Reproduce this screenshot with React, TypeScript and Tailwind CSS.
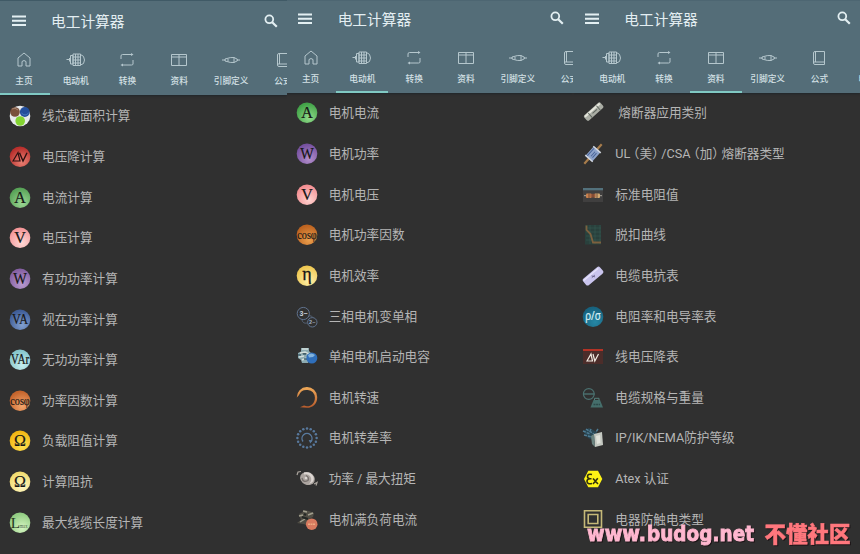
import React from "react";

const serif = '"Liberation Serif", serif';

function Menu() {
  return (
    <svg width="14" height="12" viewBox="0 0 14 12" stroke="#e3eff2" strokeWidth="2">
      <path d="M0 1.5H14M0 5.7H14M0 9.9H14" />
    </svg>
  );
}

function Search() {
  return (
    <svg width="14" height="14" viewBox="0 0 14 14" fill="none" stroke="#e3eff2">
      <circle cx="5.3" cy="5.3" r="3.9" strokeWidth="1.8" />
      <path d="M8.2 8.2L12.8 12.8" strokeWidth="2.2" />
    </svg>
  );
}

type TabKind = "home" | "motor" | "convert" | "data" | "pins" | "formula" | "next";

const tabLabels: Record<TabKind, string> = {
  home: "主页",
  motor: "电动机",
  convert: "转换",
  data: "资料",
  pins: "引脚定义",
  formula: "公式",
  next: "电路图",
};

const tabArt: Record<TabKind, React.ReactNode> = {
  home: <path d="M4 7L10 2L16 7V15H12V10.5Q10 8.5 8 10.5V15H4Z" />,
  motor: (
    <path d="M.5 8.5H4M3.5 7V10.5M4.5 4.5H7V13H4.5ZM7 3H14.5V14.5H7ZM9.5 3V14.5M12 3V14.5M14.5 3.5Q18.5 4.5 18.5 9T14.5 14M7 6H14M7 9H14M7 12H14" />
  ),
  convert: (
    <>
      <path d="M4 8V5Q4 3.5 5.5 3.5H15M16 9V13Q16 14 14.5 14H5" />
      <path d="M14 2L16.5 3.5L14 5ZM6 12.5L3.5 14L6 15.5Z" fill="#b5c7cd" stroke="none" />
    </>
  ),
  data: <path d="M2.5 3.5H17.5V14.5H2.5ZM2.5 6H17.5M10 3.5V14.5" />,
  pins: (
    <path d="M1 9H4.5M15.5 9H19M4 8Q10 6 13 6.5L16.5 8.3V9.7L13 11.5Q10 12 4 10ZM7 8V10.5M13 6.5V11.5" />
  ),
  formula: <path d="M4.5 4Q4.5 2.5 6 2.5H15.5V15.5H6Q4.5 15.5 4.5 14ZM6.5 2.5V13M4.5 13H15.5" />,
  next: <path d="M4 3H16V15H4Z" />,
};

function Tab({ kind, active }: { kind: TabKind; active: boolean }) {
  return (
    <div
      className={`flex h-full w-[51.8px] shrink-0 flex-col items-center border-b-2 ${
        active ? "border-[#80c9c3]" : "border-transparent"
      }`}
    >
      <svg
        className="shrink-0"
        width="20"
        height="17"
        viewBox="0 0 20 17"
        fill="none"
        stroke="#b5c7cd"
        strokeWidth="1"
      >
        {tabArt[kind]}
      </svg>
      <span className="mt-[7px] whitespace-nowrap text-[8.7px] leading-[12px] font-medium text-[#d3e0e5]">
        {tabLabels[kind]}
      </span>
    </div>
  );
}

function Ball({
  id,
  from,
  to,
  text,
  size = 16,
  width,
  color = "#151515",
  family = serif,
}: {
  id: string;
  from: string;
  to: string;
  text: string;
  size?: number;
  width?: number;
  color?: string;
  family?: string;
}) {
  return (
    <>
      <defs>
        <radialGradient id={id} cx=".6" cy=".75" r=".7">
          <stop offset="0" stopColor={to} />
          <stop offset="1" stopColor={from} />
        </radialGradient>
      </defs>
      <circle cx="11" cy="10.8" r="10.3" fill={`url(#${id})`} />
      <text
        x="11"
        y={10.5 + size * 0.33}
        textAnchor="middle"
        fontFamily={family}
        fontSize={size}
        fill={color}
        stroke={color}
        strokeWidth=".2"
        textLength={width}
        lengthAdjust="spacingAndGlyphs"
      >
        {text}
      </text>
    </>
  );
}

const dots = Array.from({ length: 16 }, (_, i) => (i * Math.PI) / 8);

type Item = { label: string; art: React.ReactNode; shift?: boolean };

const home: Item[] = [
  {
    label: "线芯截面积计算",
    art: (
      <>
        <circle cx="11" cy="11" r="10.3" fill="#e6e9ec" />
        <circle cx="6" cy="7" r="4.8" fill="#79503b" />
        <circle cx="15.8" cy="7" r="4.9" fill="#234f9b" />
        <circle cx="11.2" cy="16" r="4.8" fill="#83d331" />
        <path d="M3 4Q6 2 9 5" stroke="#a58570" fill="none" />
        <path d="M12.5 8Q16 12 19.5 8" stroke="#477bc0" fill="none" />
      </>
    ),
  },
  {
    label: "电压降计算",
    art: (
      <>
        <Ball id="dv" from="#b92f2c" to="#e98073" text="" />
        <path d="M4 15L9 6.5L11 15Z" fill="none" stroke="#2b1010" strokeWidth="1.2" />
        <path d="M10.5 6.8L14 15L18 6.8" fill="none" stroke="#2b1010" strokeWidth="1.4" />
      </>
    ),
  },
  { label: "电流计算", art: <Ball id="a1" from="#58a357" to="#9bd794" text="A" /> },
  { label: "电压计算", art: <Ball id="v1" from="#f59799" to="#ffd9d6" text="V" /> },
  { label: "有功功率计算", art: <Ball id="w1" from="#8560a3" to="#b99bd0" text="W" width={13.5} /> },
  { label: "视在功率计算", art: <Ball id="va" from="#3f5d98" to="#82a0d0" text="VA" size={14.5} width={16} /> },
  { label: "无功功率计算", art: <Ball id="var" from="#86c6cc" to="#c5eeee" text="VAr" size={14} width={18.5} /> },
  { label: "功率因数计算", art: <Ball id="cos1" from="#c4642c" to="#f4a66d" text="cosφ" size={13.5} width={19.5} /> },
  { label: "负载阻值计算", art: <Ball id="om1" from="#f2b614" to="#ffe253" text="Ω" /> },
  { label: "计算阻抗", art: <Ball id="om2" from="#f2dc70" to="#fff8c5" text="Ω" /> },
  {
    label: "最大线缆长度计算",
    art: (
      <>
        <Ball id="lmax" from="#91cc82" to="#d5f5c1" text="" />
        <text x="1.8" y="16" fontFamily={serif} fontSize="15" fill="#24351e">L</text>
        <text x="10.5" y="16" fontFamily={serif} fontSize="5.5" fill="#4f6b47" textLength="8" lengthAdjust="spacingAndGlyphs">max</text>
      </>
    ),
  },
];

const motor: Item[] = [
  { label: "电机电流", art: <Ball id="a2" from="#42a348" to="#91da8a" text="A" /> },
  { label: "电机功率", art: <Ball id="w2" from="#7651a0" to="#b38fcb" text="W" width={13.5} /> },
  { label: "电机电压", art: <Ball id="v2" from="#f38f92" to="#ffd3d0" text="V" /> },
  { label: "电机功率因数", art: <Ball id="cos2" from="#bd6320" to="#eb9f4d" text="cosφ" size={13.5} width={19.5} /> },
  {
    label: "电机效率",
    art: (
      <>
        <Ball id="eta" from="#efc852" to="#fff0aa" text="" />
        <text x="11" y="14.7" textAnchor="middle" fontFamily={serif} fontSize="18" fill="#151515" stroke="#151515" strokeWidth=".3">
          η
        </text>
      </>
    ),
  },
  {
    label: "三相电机变单相",
    art: (
      <g fill="none" stroke="#60728d">
        <circle cx="7.3" cy="7.5" r="6.1" />
        <circle cx="16.3" cy="16.3" r="4.7" />
        <path d="M12.5 10Q16 9 16.8 11.5M6 14Q7 18 11 17" strokeWidth=".7" />
        <text x="3.5" y="10" fontSize="7" fill="#c8d2df" stroke="none" fontWeight="bold" fontFamily="Liberation Sans, sans-serif">3~</text>
        <text x="13.1" y="18" fontSize="5.5" fill="#a4b3c7" stroke="none" fontWeight="bold" fontFamily="Liberation Sans, sans-serif">2~</text>
      </g>
    ),
  },
  {
    label: "单相电机启动电容",
    art: (
      <>
        <path d="M2 7L5 5.5L5 2H13V5L16 8L12 17L6 17L5 14L2 12Z" fill="#8caab0" />
        <path d="M6 3H12M4 7L9 6L13 8M3 11L8 10M6 14L11 12" stroke="#d2dfdb" strokeWidth="1.5" />
        <path d="M2 9H5M7 8H10M8 13H11" stroke="#40606c" strokeWidth="1.3" />
        <circle cx="15.8" cy="12" r="5.5" fill="#2f6fbb" />
        <path d="M12 9Q15 6 19 9L17 11L13 11.5Z" fill="#82b3dd" />
      </>
    ),
  },
  {
    label: "电机转速",
    art: (
      <>
        <defs>
          <linearGradient id="speed" x1="0" y1="0" x2="0" y2="1">
            <stop stopColor="#efaa59" />
            <stop offset="1" stopColor="#b75a2b" />
          </linearGradient>
        </defs>
        <path
          d="M.8 10.5A10.2 10.2 0 0 1 21.2 10C21.4 16.5 17 20.6 11 20.8L4 20.2L8 18.6L11 19.3C15.5 19.2 19 16 18.9 10.5A8.3 8.3 0 0 0 2.9 8.2Z"
          fill="url(#speed)"
        />
      </>
    ),
  },
  {
    label: "电机转差率",
    art: (
      <g fill="#58799d">
        {dots.map((d) => (
          <circle key={d} cx={11 + 9.6 * Math.cos(d)} cy={11 + 9.6 * Math.sin(d)} r="1.25" />
        ))}
        <path d="M7 14.5A5 5 0 1 1 15 14.5" fill="none" stroke="#58799d" strokeWidth="1.4" />
        <path d="M12.7 13L16.5 13.2L14.3 16.5Z" />
      </g>
    ),
  },
  {
    label: "功率 / 最大扭矩",
    art: (
      <>
        <path d="M1 7L2 4L5 3.5M18 16L21 14.5L20 17.5" fill="none" stroke="#aaa49d" strokeWidth="1.2" />
        <ellipse cx="11.5" cy="10.5" rx="7.6" ry="6.3" transform="rotate(25 11.5 10.5)" fill="#aca5a0" />
        <path d="M8 4.5Q15 3 17.5 9Q19 14 13 16Q17 12 14 8Q12 5.5 8 6.5Z" fill="#dcd6d2" />
        <path d="M6 10Q7 15 12 12.5Q13.5 9.5 10 7.5" fill="none" stroke="#77716e" strokeWidth="1.3" />
        <circle cx="10" cy="10" r="1.3" fill="#ddd8d4" />
      </>
    ),
  },
  {
    label: "电机满负荷电流",
    art: (
      <>
        <path d="M3 5L7 3L8 1L13 2L18 4L17 8L13 10L12 16L7 15L1 14L5 11Z" fill="#504e45" />
        <path d="M7 2L11 3M12 6L17 4M3 7L7 6M4 13L9 10" stroke="#a19e8d" strokeWidth="1.4" />
        <path d="M6 8L12 10M8 5L10 6" stroke="#242825" strokeWidth="2" />
        <circle cx="15.7" cy="15.2" r="5.8" fill="#d77a5f" />
        <path d="M12 15.2H19" stroke="#ecab82" strokeWidth="1.6" strokeDasharray="2 .5" />
      </>
    ),
  },
];

const data: Item[] = [
  {
    label: "熔断器应用类别",
    shift: true,
    art: (
      <g transform="rotate(-42 12 10)">
        <rect x="1" y="6" width="22" height="7" rx="2" fill="#aaada4" />
        <path d="M2 7.5H22" stroke="#e5e6dc" strokeWidth="2" />
        <path d="M7 7V13M18 7V13M10 10H16" stroke="#606760" />
      </g>
    ),
  },
  {
    label: "UL（美）/CSA（加）熔断器类型",
    art: (
      <g transform="rotate(-48 11 11)">
        <path d="M-2 11H24" stroke="#a77c4b" strokeWidth="2.2" />
        <rect x="5" y="6.5" width="12" height="9" rx="1" fill="#8da3cb" />
        <path d="M5 8H17M8 11H14M8 13H14" stroke="#496599" />
        <path d="M5 6V16M17 6V16" stroke="#d3d8e1" strokeWidth="1.5" />
      </g>
    ),
  },
  {
    label: "标准电阻值",
    art: (
      <>
        <path d="M1 4H21V18H1Z" fill="#403f3f" />
        <path d="M1 4H21V6.3H1Z" fill="#53717c" />
        <path d="M2 11.7H20" stroke="#aaa59b" />
        <rect x="4" y="9.4" width="5.5" height="4.6" rx="1" fill="#c9824f" />
        <rect x="12.5" y="9.4" width="5.5" height="4.6" rx="1" fill="#d3aa73" />
        <path d="M8.5 9.8H13.5V13.5H8.5Z" fill="#9b5a3d" />
        <path d="M7 9.5V14M11 10V13.5M15 9.5V14" stroke="#5e3a2b" strokeWidth=".8" />
      </>
    ),
  },
  {
    label: "脱扣曲线",
    art: (
      <>
        <path d="M3 1H19V20.5H3Z" fill="#29403c" />
        <path d="M4 4H19M4 8H19M4 12H19M4 16H19M8 1V20M13 1V20M18 1V20" stroke="#3a5f54" strokeWidth=".5" />
        <path d="M4.5 1.5V6L8.5 10L11 18.5H19" fill="none" stroke="#7d603e" strokeWidth="1.8" />
      </>
    ),
  },
  {
    label: "电缆电抗表",
    art: (
      <g transform="rotate(-40 11 11)">
        <rect x="0" y="6.8" width="22" height="8.5" rx="2.2" fill="#c9c4ed" />
        <path d="M1 8.5H20" stroke="#e5e2fa" strokeWidth="1.5" />
        <path d="M9 11.5H13M10 10L12 13" stroke="#625d86" strokeWidth=".8" />
      </g>
    ),
  },
  {
    label: "电阻率和电导率表",
    art: <Ball id="rho" from="#17627e" to="#2687a5" text="ρ/σ" size={12} width={15.5} color="#d7eef4" family='"Noto Sans", sans-serif' />,
  },
  {
    label: "线电压降表",
    art: (
      <>
        <path d="M1 3H21V18H1Z" fill="#4c2d2a" />
        <path d="M1 3H21V5H1Z" fill="#b43326" />
        <path d="M5 15L9 8L10.5 15ZM11 8L12.8 15L16.5 8" fill="none" stroke="#f0e9df" strokeWidth="1.2" />
      </>
    ),
  },
  {
    label: "电缆规格与重量",
    art: (
      <>
        <circle cx="6.8" cy="7" r="5.4" fill="none" stroke="#4b7170" strokeWidth="1.2" />
        <path d="M1 7H12.6" stroke="#4b7170" strokeWidth="1.4" />
        <path d="M11.5 13H18L21 20.5H8.5Z" fill="#456e6b" />
        <path d="M12.5 13V11.3H17V13" fill="none" stroke="#55817c" />
        <path d="M11.5 17.5H18" stroke="#2c4949" strokeWidth="1.5" strokeDasharray="2 .6" />
      </>
    ),
  },
  {
    label: "IP/IK/NEMA防护等级",
    art: (
      <>
        <path d="M1 4L7 1L15 5L13 14L6 11Z" fill="#294653" />
        <path d="M1 4L8 7M4 2L12 7M2 8L10 10M9 2L8 4M16 2L14 5" stroke="#4f7c94" strokeWidth="1.4" strokeDasharray="3 1" />
        <path d="M12 7L20 5L21 18L13 20Z" fill="#c4c8c1" />
        <path d="M14 9L18 8L18.5 16L15 17Z" fill="#e0e2db" />
        <path d="M9 9L12 7L13 20L10 17Z" fill="#6b8380" />
      </>
    ),
  },
  {
    label: "Atex 认证",
    art: (
      <>
        <path d="M2 11L6.3 2.8H16L20.3 11L16 19.2H6.3Z" fill="#fff415" />
        <path d="M10 6.5Q5.5 5.5 5.5 8.6Q5.5 10.5 8 10.7Q4.8 11 5 13.5Q5.2 16.5 10 15.5M6 10.7H9.5M11 10.5L16 16M15.8 10.3L11 16" fill="none" stroke="#31310e" strokeWidth="1.6" />
      </>
    ),
  },
  {
    label: "电器防触电类型",
    art: (
      <g fill="none" stroke="#c6b978" strokeWidth="1.6">
        <path d="M2.5 1.8H19.5V18.2H2.5ZM6.2 5.5H15.8V14.5H6.2Z" />
      </g>
    ),
  },
];

/* Full-width brackets are pulled in towards the characters around them. */
function Label({ text }: { text: string }) {
  return (
    <>
      {text.split(/([（）])/).map((part, i) =>
        part === "（" ? (
          <span key={i} className="-ml-[3.5px]">（</span>
        ) : part === "）" ? (
          <span key={i} className="-mr-[3.5px]">）</span>
        ) : (
          part
        ),
      )}
    </>
  );
}

function Phone({
  tabs,
  active,
  items,
  first = false,
  tabInset,
}: {
  tabs: TabKind[];
  active: TabKind;
  items: Item[];
  first?: boolean;
  tabInset: string;
}) {
  return (
    <section className="flex h-full min-w-0 flex-1 flex-col overflow-hidden bg-[#303030]">
      <header
        className={`flex shrink-0 flex-col border-t bg-[#546d78] shadow-[0_1px_2px_#202629] ${
          first ? "h-[95px] border-[#405a66] pt-px" : "h-[93px] border-[#4d6672]"
        }`}
      >
        <div className={`flex h-[37px] shrink-0 items-center pr-[9px] pl-[11.5px] ${first ? "" : "-mt-px"}`}>
          <Menu />
          <h1
            className={`ml-[25.5px] text-[14.7px] leading-5 text-[#e3eef2] ${first ? "mt-[3px]" : "mt-[2px]"}`}
          >
            电工计算器
          </h1>
          <div className={`ml-auto h-[14px] ${first ? "mt-px" : "-mt-px"}`}>
            <Search />
          </div>
        </div>
        <nav className={`mt-[12px] flex min-h-0 flex-1 ${first ? "" : "pt-0"} ${tabInset}`}>
          {tabs.map((t) => (
            <Tab key={t} kind={t} active={t === active} />
          ))}
        </nav>
      </header>
      <ul className={first ? "pt-px" : ""}>
        {items.map((item) => (
          <li key={item.label} className="flex h-[40.65px] items-center pl-[9px]">
            <svg className="shrink-0" width="22" height="22" viewBox="0 0 22 22">
              {item.art}
            </svg>
            <span
              className={`text-[12.65px] leading-[18px] whitespace-nowrap text-[#b5b5b5] ${
                item.shift ? "ml-[14px]" : "ml-[11px]"
              }`}
            >
              <Label text={item.label} />
            </span>
          </li>
        ))}
      </ul>
    </section>
  );
}

export default function App() {
  return (
    <main className="relative flex h-[554px] w-[860px] overflow-hidden bg-[#303030] font-['Roboto','Noto_Sans_CJK_SC',sans-serif]">
      <Phone
        first
        tabs={["home", "motor", "convert", "data", "pins", "formula"]}
        active="home"
        items={home}
        tabInset="-ml-[2px]"
      />
      <Phone
        tabs={["home", "motor", "convert", "data", "pins", "formula"]}
        active="motor"
        items={motor}
        tabInset="-ml-[2px]"
      />
      <Phone
        tabs={["motor", "convert", "data", "pins", "formula", "next"]}
        active="data"
        items={data}
        tabInset="ml-[13px]"
      />
      <svg
        className="absolute right-0 bottom-0 [filter:drop-shadow(1px_1px_0_#1c1416)]"
        width="280"
        height="38"
        viewBox="580 516 280 38"
        fontWeight="900"
      >
        <g fill="#ffb7cf" stroke="#ffb7cf" strokeWidth=".9" fontFamily='"DejaVu Sans", sans-serif'>
          <text x="587" y="541" fontSize="21" textLength="59" lengthAdjust="spacingAndGlyphs">www.</text>
          <text x="647" y="541" fontSize="21" textLength="107" lengthAdjust="spacingAndGlyphs">budog.net</text>
        </g>
        <text
          x="764.5"
          y="541.5"
          fontSize="21.5"
          fill="#ff777d"
          stroke="#ff777d"
          strokeWidth=".5"
          fontFamily='"Noto Sans CJK SC", sans-serif'
        >
          不懂社区
        </text>
      </svg>
    </main>
  );
}
